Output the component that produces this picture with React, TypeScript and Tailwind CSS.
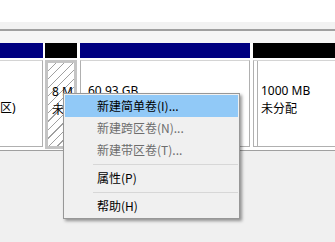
const menuItems = [
  { label: '新建简单卷(I)...', active: true },
  { label: '新建跨区卷(N)...', disabled: true },
  { label: '新建带区卷(T)...', disabled: true },
  { sep: true },
  { label: '属性(P)' },
  { sep: true },
  { label: '帮助(H)' },
];

function MenuRow({ item }: { item: (typeof menuItems)[number] }) {
  if (item.sep) {
    return (
      <div className="flex h-[6px] items-center pl-[28px]">
        <div className="h-px w-full bg-[#d7d7d7]" />
      </div>
    );
  }
  return (
    <div
      className={`flex h-[22px] items-center pl-[32px] ${item.active ? 'bg-[#91c9f7]' : ''} ${
        item.disabled ? 'text-[#6d6d6d]' : 'text-black'
      }`}
    >
      {item.label}
    </div>
  );
}

export default function App() {
  return (
    <div className="relative h-[242px] w-[335px] overflow-hidden bg-[#f0f0f0] font-['Noto_Sans','Noto_Sans_CJK_SC',sans-serif] text-[12px] leading-[18px] text-black">
      <div className="h-[22px] bg-white" />
      <div className="h-[7px] bg-[#f2f2f2]" />
      <div className="h-[2px] bg-[#a0a0a0]" />
      <div className="h-[12px] bg-[#f6f6f6]" />

      {/* partitions */}
      <div className="flex h-[104px] bg-white">
        <div className="flex w-[43px] flex-col">
          <div className="h-[15px] bg-[#000080]" />
          <div className="mt-[2px] flex-1 border-r border-t border-b border-[#b0b0b0] border-t-[#d4d4d4] pt-[38px] whitespace-nowrap">
            区)
          </div>
        </div>

        <div className="ml-[2px] flex w-[32px] flex-col">
          <div className="h-[15px] bg-black" />
          <div className="mt-[2px] -mb-[2px] flex-1 overflow-hidden whitespace-nowrap border-[3px] border-[#c4c4c4] bg-[repeating-linear-gradient(135deg,#ffffff_0px,#ffffff_5px,#a0a0a0_5px,#a0a0a0_6px)] pl-[4px] pt-[20px]">
            <div>8 M</div>
            <div>未</div>
          </div>
        </div>

        <div className="ml-[3px] flex w-[170px] flex-col">
          <div className="h-[15px] bg-[#000080]" />
          <div className="mt-[2px] flex-1 border border-[#b0b0b0] border-t-[#d4d4d4] pl-[7px] pt-[21px]">
            <div>60.93 GB</div>
          </div>
        </div>

        <div className="ml-[3px] flex flex-1 flex-col">
          <div className="h-[15px] bg-black" />
          <div className="mt-[2px] flex flex-1 border-l border-b border-t border-[#b0b0b0] border-t-[#d4d4d4] pl-[3px]">
            <div className="flex-1 border-l border-[#b0b0b0] pl-[3px] pt-[21px]">
              <div>1000 MB</div>
              <div>未分配</div>
            </div>
          </div>
        </div>
      </div>

      <div className="h-[3px] bg-white" />
      <div className="h-px bg-[#a0a0a0]" />

      {/* context menu */}
      <div className="absolute left-[63px] top-[93px] w-[177px] border border-[#979797] bg-[#f0f0f0] p-[1px] font-['Noto_Sans_CJK_SC',sans-serif] shadow-[2px_2px_3px_rgba(0,0,0,0.4)]">
        {menuItems.map((item, i) => (
          <MenuRow key={i} item={item} />
        ))}
      </div>
    </div>
  );
}
